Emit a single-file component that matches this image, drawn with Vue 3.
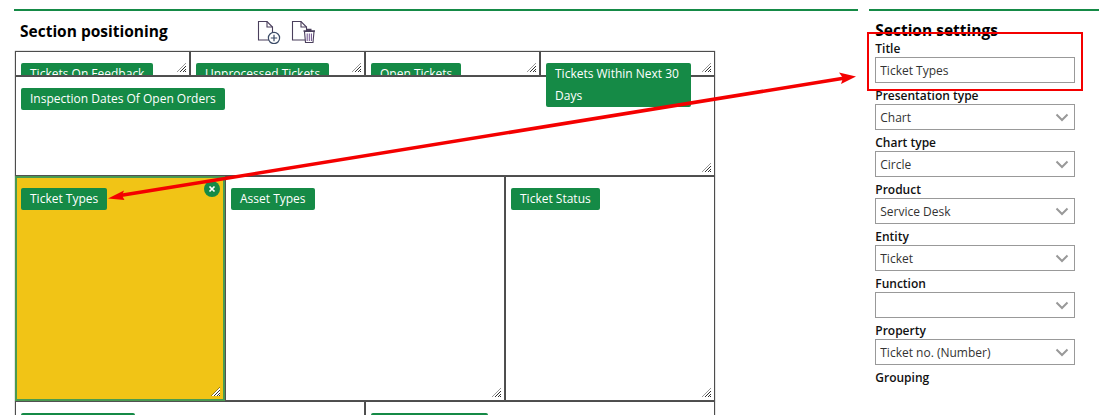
<template>
  <div class="page">
    <section class="panel left">
      <header class="head">
        <h2>Section positioning</h2>
        <div class="tools">
          <svg width="26" height="24" viewBox="0 0 26 24" fill="none">
            <path d="M1.5 1.5h8.5l5.5 5.5v13h-14z" fill="#fff" stroke="#4a3f5c" stroke-width="1.1" />
            <path d="M10 1.5v5.5h5.5" stroke="#4a3f5c" stroke-width="1.1" />
            <circle cx="17" cy="18" r="5.6" fill="#fff" stroke="#3a4a66" stroke-width="1.2" />
            <path d="M17 14.8v6.4M13.8 18h6.4" stroke="#3a4a66" stroke-width="1.2" />
          </svg>
          <svg width="26" height="24" viewBox="0 0 26 24" fill="none">
            <path d="M1.5 1.5h8.5l5.5 5.5v13h-14z" fill="#fff" stroke="#4a3f5c" stroke-width="1.1" />
            <path d="M10 1.5v5.5h5.5" stroke="#4a3f5c" stroke-width="1.1" />
            <path d="M13.5 11.5h9.5l-1 11h-7.5z" fill="#fff" stroke="#4a3f5c" stroke-width="1.1" />
            <path d="M12.5 11h11.5M16 9.5h4.5" stroke="#4a3f5c" stroke-width="1.3" />
            <path d="M16.2 13.5v7.5M18.3 13.5v7.5M20.4 13.5v7.5" stroke="#6d4f8c" stroke-width="1" />
          </svg>
        </div>
      </header>

      <div class="canvas">
        <div v-for="(row, i) in rows" :key="i" class="row" :style="{ height: row.height + 'px' }">
          <div
            v-for="cell in row.cells"
            :key="cell.title"
            class="cell"
            :class="{ selected: cell.selected, spill: cell.spill }"
            :style="{ width: cell.width + 'px' }"
          >
            <span class="chip">{{ cell.title }}</span>
            <span v-if="cell.selected" class="close">
              <svg width="8" height="8" viewBox="0 0 8 8"><path d="M1.5 1.5l5 5M6.5 1.5l-5 5" stroke="#fff" stroke-width="1.7" /></svg>
            </span>
            <i class="grip"></i>
          </div>
        </div>
      </div>
    </section>

    <aside class="panel right">
      <h2>Section settings</h2>
      <div class="field title-field">
        <label>Title</label>
        <input type="text" value="Ticket Types" />
      </div>
      <div v-for="f in fields" :key="f.label" class="field">
        <label>{{ f.label }}</label>
        <div class="select">
          <span>{{ f.value }}</span>
          <svg width="14" height="9" viewBox="0 0 14 9" fill="none"><path d="M1.5 1.5L7 7l5.5-5.5" stroke="#999" stroke-width="2" /></svg>
        </div>
      </div>
      <div class="field"><label>Grouping</label></div>
    </aside>

    <svg class="arrow" width="1099" height="415" viewBox="0 0 1099 415">
      <path d="M120 195.5L845 78" stroke="#f40000" stroke-width="3.6" fill="none" />
      <path d="M108 198.500L124 190.500L122 195.500L124.500 200z" fill="#f40000" />
      <path d="M856 76.500L839 72.500L843 78L841 84z" fill="#f40000" />
    </svg>
  </div>
</template>

<script setup>
const rows = [
  {
    height: 25,
    cells: [
      { title: 'Tickets On Feedback', width: 175 },
      { title: 'Unprocessed Tickets', width: 175 },
      { title: 'Open Tickets', width: 175 },
      { title: 'Tickets Within Next 30 Days', width: 175, spill: true }
    ]
  },
  { height: 100, cells: [{ title: 'Inspection Dates Of Open Orders', width: 700 }] },
  {
    height: 225,
    cells: [
      { title: 'Ticket Types', width: 210, selected: true },
      { title: 'Asset Types', width: 280 },
      { title: 'Ticket Status', width: 210 }
    ]
  },
  {
    height: 100,
    cells: [
      { title: 'Tickets By Owner', width: 350 },
      { title: 'Tickets By Priority', width: 350 }
    ]
  }
]

const fields = [
  { label: 'Presentation type', value: 'Chart' },
  { label: 'Chart type', value: 'Circle' },
  { label: 'Product', value: 'Service Desk' },
  { label: 'Entity', value: 'Ticket' },
  { label: 'Function', value: '' },
  { label: 'Property', value: 'Ticket no. (Number)' }
]
</script>

<style>
html, body { overflow: hidden; background: #fff; }
</style>

<style scoped>
.page {
  position: relative;
  width: 1099px;
  height: 415px;
  overflow: hidden;
  display: flex;
  font-family: "Open Sans", "Noto Sans", sans-serif;
  font-size: 12px;
  color: #111;
  background: #fff;
}
.panel {
  margin-top: 9px;
  border-top: 2px solid #158a46;
}
.left {
  width: 849px;
  margin-left: 14px;
}
.right {
  width: 225px;
  margin-left: 11px;
  padding-left: 6px;
}
h2 {
  margin: 0;
  font-size: 15.5px;
  font-weight: 700;
  line-height: 20px;
  color: #000;
}
.head {
  display: flex;
  align-items: center;
  height: 40px;
  padding-left: 6px;
}
.tools {
  display: flex;
  gap: 8px;
  margin-left: 89px;
  margin-top: 2px;
}
.right h2 { margin-top: 9px; }
.canvas { margin-left: 1px; width: 700px; }
.row { display: flex; }
.cell {
  position: relative;
  box-sizing: border-box;
  padding: 11px 0 0 5px;
  border: 1px solid #4d4d4d;
  box-shadow: 0 0 1px #666;
  overflow: hidden;
}
.cell.spill { overflow: visible; z-index: 2; }
.cell.spill .chip { width: 127px; display: inline-block; }
.cell.selected {
  background: #f1c416;
  border: 2px solid #4a9a50;
  padding: 10px 0 0 4px;
  overflow: visible;
  z-index: 1;
}
.chip {
  display: inline-block;
  padding: 0 9px;
  line-height: 22px;
  border-radius: 2px;
  background: #158a46;
  color: #fff;
}
.close {
  position: absolute;
  top: 3px;
  right: 3px;
  width: 16px;
  height: 16px;
  border-radius: 50%;
  background: #158a46;
  display: flex;
  align-items: center;
  justify-content: center;
}
.grip {
  position: absolute;
  right: 3px;
  bottom: 3px;
  width: 9px;
  height: 9px;
  clip-path: polygon(100% 0, 100% 100%, 0 100%);
  background: repeating-linear-gradient(135deg, #333 0 1px, #fff 1px 2px);
}
.field { margin-top: 3px; }
.field label {
  display: block;
  font-weight: 600;
  line-height: 16px;
  color: #111;
}
.field input,
.select {
  box-sizing: border-box;
  display: flex;
  align-items: center;
  justify-content: space-between;
  width: 200px;
  height: 26px;
  margin-bottom: 5px;
  padding: 0 5px 0 4px;
  border: 1px solid #999;
  font: inherit;
  color: #333;
  background: #fff;
}
.title-field {
  position: relative;
  margin-top: 1px;
}
.title-field::after {
  content: "";
  position: absolute;
  left: -8px;
  top: -9px;
  width: 212px;
  height: 55px;
  border: 2px solid #f40000;
}
.arrow {
  position: absolute;
  inset: 0;
  z-index: 5;
  pointer-events: none;
}
</style>
